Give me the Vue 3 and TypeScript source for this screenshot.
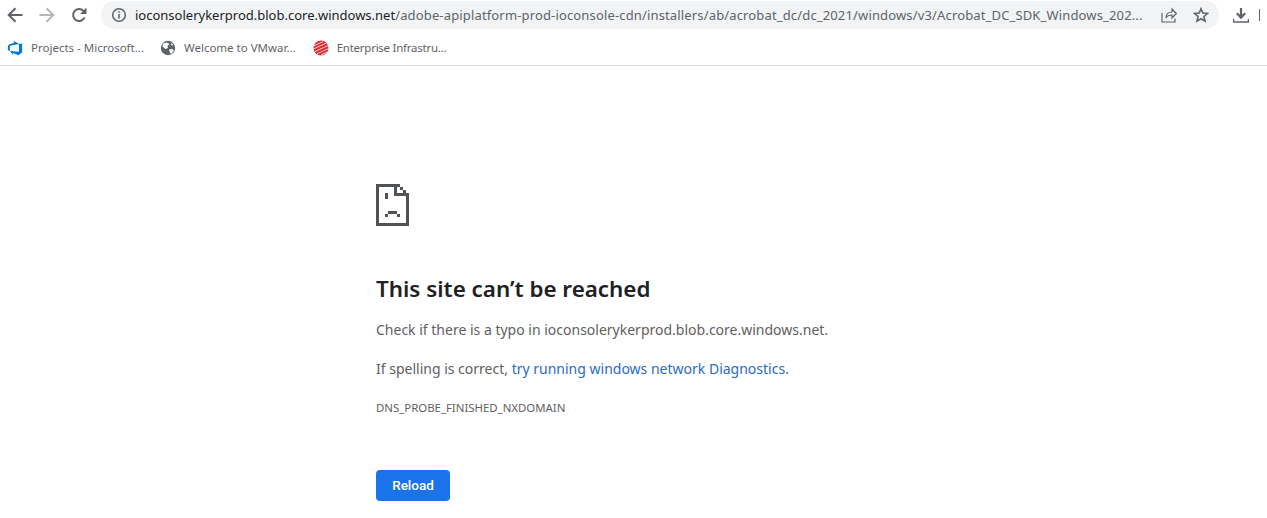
<template>
  <div class="page">
    <header class="toolbar">
      <button class="nav" aria-label="Back">
        <svg width="16" height="16" viewBox="0 0 16 16"><path d="M15.500 8H2M8.500 1.200 1.700 8l6.800 6.800" fill="none" stroke="#5f6368" stroke-width="2" /></svg>
      </button>
      <button class="nav" aria-label="Forward">
        <svg width="16" height="16" viewBox="0 0 16 16"><path d="M.5 8H14M7.500 1.200 14.300 8l-6.800 6.800" fill="none" stroke="#b4b6b8" stroke-width="2" /></svg>
      </button>
      <button class="nav" aria-label="Reload">
        <svg width="16" height="16" viewBox="0 0 16 16"><path d="M13.600 10.400A6 6 0 1 1 12.400 3.900L14 5.600" fill="none" stroke="#5f6368" stroke-width="2" /><path d="M15.500 0.500V7H9Z" fill="#5f6368" /></svg>
      </button>
      <div class="omnibox">
        <svg class="info" width="16" height="16" viewBox="0 0 16 16"><circle cx="8" cy="8" r="6.300" fill="none" stroke="#5f6368" stroke-width="1.500" /><path d="M7.200 7h1.600v4.600H7.200zM7.200 4.200h1.600v1.600H7.200z" fill="#5f6368" /></svg>
        <span class="url"><span class="host">{{ host }}</span><span class="path">{{ path }}</span></span>
        <svg class="share" width="16" height="16" viewBox="0 0 16 16"><path d="M1 6v9h13v-3.500M5 11c0-4 2.500-6 6-6V2l4.300 4.500L11 11V8C8 8 6 9 5 11Z" fill="none" stroke="#5f6368" stroke-width="1.200" /></svg>
        <svg class="star" width="16" height="16" viewBox="0 0 16 16"><path d="m8 1.800 1.800 4.300 4.700.4-3.600 3 1.100 4.600L8 11.700l-4 2.400 1.100-4.600-3.600-3 4.700-.4Z" fill="none" stroke="#5f6368" stroke-width="1.600" /></svg>
      </div>
      <svg class="download" width="16" height="16" viewBox="0 0 16 16"><path d="M8 1v9M3.800 6.300 8 10.600l4.200-4.300" fill="none" stroke="#5f6368" stroke-width="2.200" /><path d="M0.500 12v3h15v-3" fill="none" stroke="#5f6368" stroke-width="1.600" /></svg>
      <span class="profile-edge"></span>
    </header>

    <nav class="bookmarks">
      <a v-for="b in bookmarks" :key="b.label" class="bookmark">
        <svg v-if="b.icon === 'devops'" width="16" height="16" viewBox="0 0 18 18"><path fill="#0078d7" d="M17 4v9.740l-4 3.280-6.200-2.260V17l-3.510-4.590 10.230.8V4.440zm-3.410.49L7.850 1v2.290L2.580 4.840 1 6.870v4.610l2.260 1V6.570z" /></svg>
        <svg v-else-if="b.icon === 'globe'" width="16" height="16" viewBox="0 0 16 16"><circle cx="8" cy="8" r="7.200" fill="#5f6368" /><path d="M3 3.500 7 2.500 9.500 4 7.500 6 8 8 5.500 9 2.500 6.500ZM9 9.500l3.500-.5 1.500 1.500-2.500 3-1.500-.5ZM11 2.800 13.500 5 11.500 5.500Z" fill="#fff" /></svg>
        <svg v-else width="16" height="16" viewBox="0 0 16 16"><circle cx="8" cy="8" r="7.500" fill="#dd2a30" /><path d="M1 5.800 10 1.600M.8 8.800 13.500 3M1.800 11.600 15 5.600M4 13.800 15.500 8.600M8 15 14.500 12" stroke="#fff" stroke-width="0.800" /></svg>
        <span>{{ b.label }}</span>
      </a>
    </nav>

    <main class="error">
      <svg class="sad" width="33" height="42" viewBox="0 0 11 14" shape-rendering="crispEdges">
        <path fill="#505356" d="M0 0h8v1H1v12h9V3h1v11H0ZM6 1h1v2h3v1H6ZM8 1h1v1H8ZM9 2h1v1H9ZM3 3h1v2H3ZM4 9h3v1H4ZM3 10h1v1H3ZM7 10h1v1H7Z" />
      </svg>
      <h1>This site can’t be reached</h1>
      <p class="line">Check if there is a typo in {{ host }}.</p>
      <p class="line">If spelling is correct, <a class="link">try running windows network Diagnostics</a>.</p>
      <div class="code">DNS_PROBE_FINISHED_NXDOMAIN</div>
      <button class="reload">Reload</button>
    </main>
  </div>
</template>

<script setup lang="ts">
interface Bookmark {
  label: string;
  icon: 'devops' | 'globe' | 'sphere';
}

const host = 'ioconsolerykerprod.blob.core.windows.net';
const path = '/adobe-apiplatform-prod-ioconsole-cdn/installers/ab/acrobat_dc/dc_2021/windows/v3/Acrobat_DC_SDK_Windows_202...';

const bookmarks: Bookmark[] = [
  { label: 'Projects - Microsoft...', icon: 'devops' },
  { label: 'Welcome to VMwar...', icon: 'globe' },
  { label: 'Enterprise Infrastru...', icon: 'sphere' },
];
</script>

<style>
html, body {
  margin: 0;
  background: #fff;
}
</style>

<style scoped>
.page {
  width: 1267px;
  height: 518px;
  overflow: hidden;
  font-family: "Noto Sans", "Open Sans", sans-serif;
  color: #202124;
}

.toolbar {
  display: flex;
  align-items: center;
  height: 30px;
  padding-left: 7px;
}

.nav {
  width: 16px;
  height: 16px;
  padding: 0;
  margin-right: 16px;
  border: 0;
  background: none;
}

.nav:nth-child(3) {
  margin-right: 14px;
}

.omnibox {
  display: flex;
  align-items: center;
  width: 1118px;
  height: 28px;
  box-sizing: border-box;
  padding-left: 10px;
  background: #f1f3f4;
  border-radius: 14px;
}

.url {
  margin-left: 8px;
  width: 1010px;
  font-size: 13px;
  color: #5f6368;
  white-space: nowrap;
  overflow: hidden;
}

.host {
  color: #202124;
}

.path {
  letter-spacing: 0.15px;
}

.share,
.star {
  margin-left: 16px;
}

.download {
  margin-left: 14px;
}

.profile-edge {
  width: 1px;
  height: 12px;
  margin-left: 10px;
  background: #5f6368;
}

.bookmarks {
  display: flex;
  align-items: center;
  height: 36px;
  padding-left: 7px;
  box-sizing: border-box;
  border-bottom: 1px solid #dadce0;
}

.bookmark {
  display: flex;
  align-items: center;
  gap: 8px;
  margin-right: 16px;
  font-size: 11.500px;
  color: #5f6368;
}

.bookmark:nth-child(2) {
  margin-right: 17px;
}

.bookmark:last-child {
  letter-spacing: -0.25px;
}

.error {
  padding: 118px 0 0 376px;
}

.sad {
  display: block;
}

h1 {
  margin: 47px 0 0;
  font-size: 22.400px;
  line-height: 32px;
  font-weight: 600;
  color: #202124;
}

.line {
  margin: 13px 0 0;
  font-size: 14px;
  line-height: 23px;
  color: #5f6060;
}

.line + .line {
  margin-top: 16px;
}

.link {
  color: #2b6cc4;
}

.code {
  margin-top: 20px;
  font-size: 11.400px;
  line-height: 16px;
  color: #5f6060;
}

.reload {
  display: block;
  width: 74px;
  height: 31px;
  margin-top: 54px;
  padding: 0 0 2px;
  border: 0;
  border-radius: 4px;
  background: #1a73e8;
  color: #fff;
  font: 500 13.500px "Roboto", sans-serif;
}
</style>
